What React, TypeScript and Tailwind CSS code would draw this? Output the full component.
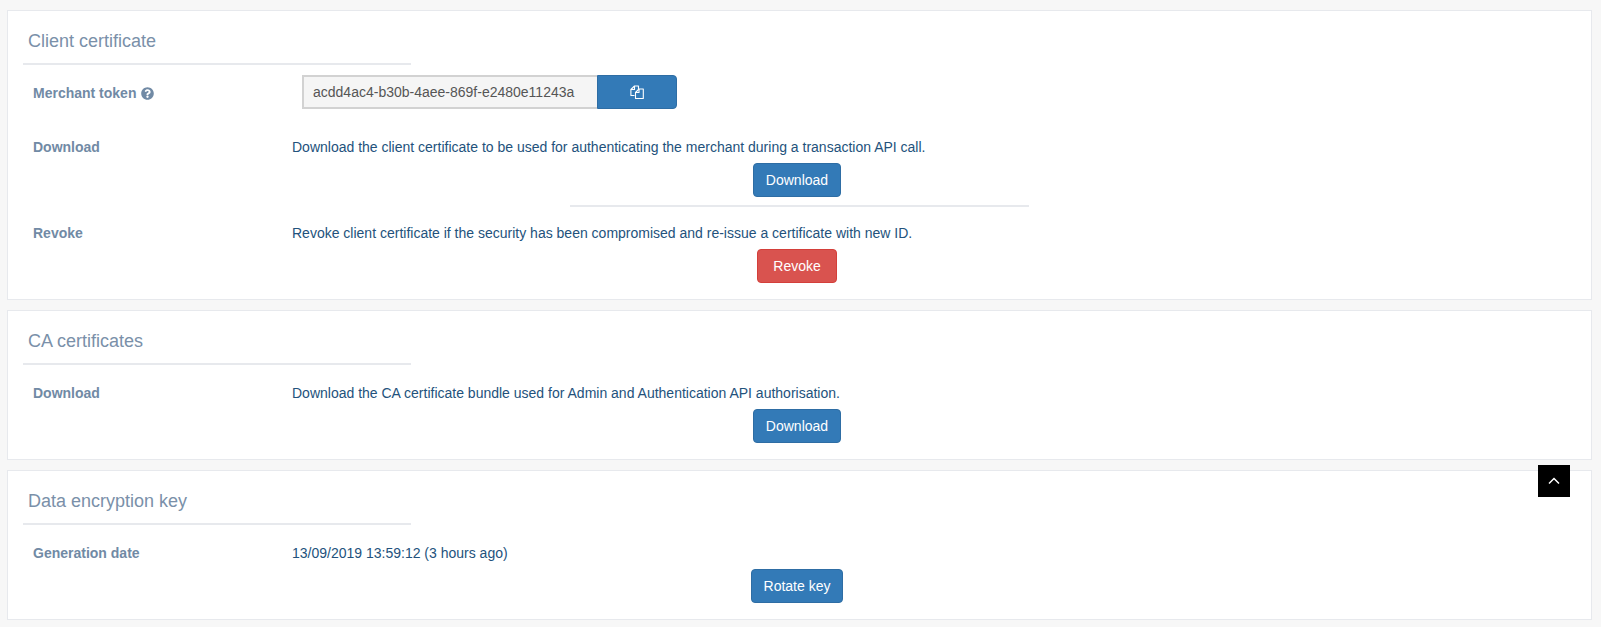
import { FaQuestionCircle } from "react-icons/fa";

const btn =
  "inline-flex h-[34px] items-center justify-center rounded-[4px] border px-3 text-sm text-white";
const blue = "border-[#2e6da4] bg-[#337ab7]";

function CopyIcon() {
  return (
    <svg width="14" height="14" viewBox="0 0 14 14" fill="none" stroke="white" strokeWidth="1.1" strokeLinejoin="round">
      <path d="M4.5 10.5H.9V4.5L4.5 1H8.5V4" />
      <path d="M4.5 1V4.5H.9" />
      <path d="M5.5 13.5V7.5L9 4H13.3V13.5Z" />
      <path d="M9 4V7.5H5.5" />
    </svg>
  );
}

function Card({ title, className, children }: { title: string; className: string; children: React.ReactNode }) {
  return (
    <section className={`border border-[#e7e9ed] bg-white ${className}`}>
      <h2 className="ml-[15px] pt-5 text-[18px] leading-5 font-normal text-[#7a90a9]">
        <span className="block w-[388px] border-b-2 border-[#e7e9ed] pb-3 pl-[5px]">{title}</span>
      </h2>
      {children}
    </section>
  );
}

function Row({ label, children }: { label: React.ReactNode; children: React.ReactNode }) {
  return (
    <div className="flex">
      <div className="w-[269px] shrink-0 pl-[25px] text-sm leading-5 font-bold text-[#718aa5]">{label}</div>
      <div className="w-[1040px] px-[15px] text-sm leading-5 text-[#23527c]">{children}</div>
    </div>
  );
}

function Action({ children, className }: { children: string; className: string }) {
  return (
    <div className="mt-1.5 flex justify-center">
      <button className={`${btn} ${className}`}>{children}</button>
    </div>
  );
}

export default function App() {
  return (
    <div className="relative flex h-[627px] flex-col gap-[10px] overflow-hidden bg-[#f7f7f7] pt-[10px] pr-[9px] pl-[7px] font-['Liberation_Sans',sans-serif]">
      <Card title="Client certificate" className="h-[290px]">
        <div className="mt-[10px] flex items-center">
          <div className="w-[294px] shrink-0 pt-0.5 pl-[25px] text-sm leading-5 font-bold text-[#718aa5]">
            Merchant token <FaQuestionCircle className="ml-px inline-block align-[-2px] text-[13px]" />
          </div>
          <div className="flex h-[34px] w-[375px]">
            <div className="flex w-[295px] items-center border-2 border-r-0 border-[#d2d2d2] bg-[#f5f5f5] pl-[9px] text-sm text-[#555]">
              acdd4ac4-b30b-4aee-869f-e2480e11243a
            </div>
            <button className={`flex flex-1 items-center justify-center rounded-r-[4px] border ${blue}`}>
              <CopyIcon />
            </button>
          </div>
        </div>
        <div className="mt-7">
          <Row label="Download">
            Download the client certificate to be used for authenticating the merchant during a transaction API call.
            <Action className={blue}>Download</Action>
          </Row>
        </div>
        <hr className="mt-2 mb-4 ml-[562px] w-[459px] border-t-2 border-[#e7e9ed]" />
        <Row label="Revoke">
          Revoke client certificate if the security has been compromised and re-issue a certificate with new ID.
          <Action className="min-w-[80px] border-[#d43f3a] bg-[#d9534f]">Revoke</Action>
        </Row>
      </Card>
      <Card title="CA certificates" className="h-[150px]">
        <div className="mt-[18px]">
          <Row label="Download">
            Download the CA certificate bundle used for Admin and Authentication API authorisation.
            <Action className={blue}>Download</Action>
          </Row>
        </div>
      </Card>
      <Card title="Data encryption key" className="h-[150px]">
        <div className="mt-[18px]">
          <Row label="Generation date">
            13/09/2019 13:59:12 (3 hours ago)
            <Action className={blue}>Rotate key</Action>
          </Row>
        </div>
      </Card>
      <button className="absolute top-[465px] left-[1538px] flex h-8 w-8 items-center justify-center bg-black">
        <svg width="12" height="8" viewBox="0 0 12 8" fill="none" stroke="white" strokeWidth="1.5">
          <path d="M1 6.5 6 1.5l5 5" />
        </svg>
      </button>
    </div>
  );
}
